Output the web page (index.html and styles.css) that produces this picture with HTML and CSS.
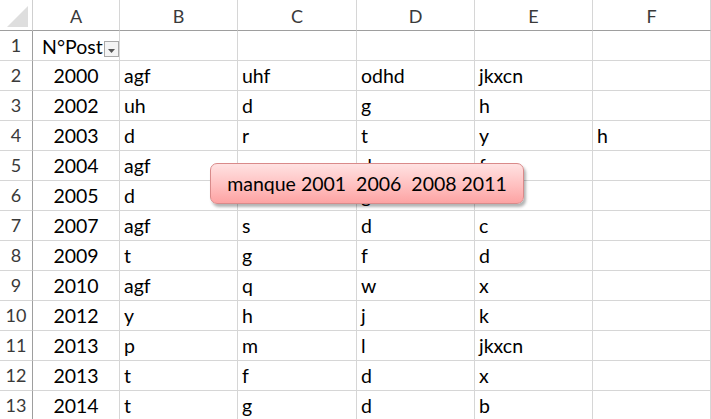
FILE: index.html
```html
<!DOCTYPE html>
<html>
<head>
<meta charset="utf-8">
<link rel="stylesheet" href="styles.css">
</head>
<body>
<div class="sheet">
  <div class="grid">
    <div class="corner"><svg width="22" height="21" viewBox="0 0 22 21"><polygon points="21,0 21,21 0,21" fill="#dedede"/></svg></div>
    <div class="colh">A</div><div class="colh">B</div><div class="colh">C</div><div class="colh">D</div><div class="colh">E</div><div class="colh">F</div>

    <div class="rowh">1</div><div class="c hdr">N°Post<span class="filter"><svg width="7" height="4" viewBox="0 0 7 4"><polygon points="0,0 7,0 3.5,4" fill="#555"/></svg></span></div><div class="c"></div><div class="c"></div><div class="c"></div><div class="c"></div><div class="c"></div>

    <div class="rowh">2</div><div class="c n">2000</div><div class="c">agf</div><div class="c">uhf</div><div class="c">odhd</div><div class="c">jkxcn</div><div class="c"></div>
    <div class="rowh">3</div><div class="c n">2002</div><div class="c">uh</div><div class="c">d</div><div class="c">g</div><div class="c">h</div><div class="c"></div>
    <div class="rowh">4</div><div class="c n">2003</div><div class="c">d</div><div class="c">r</div><div class="c">t</div><div class="c">y</div><div class="c">h</div>
    <div class="rowh">5</div><div class="c n">2004</div><div class="c">agf</div><div class="c"></div><div class="c">d</div><div class="c">f</div><div class="c"></div>
    <div class="rowh">6</div><div class="c n">2005</div><div class="c">d</div><div class="c"></div><div class="c">g</div><div class="c"></div><div class="c"></div>
    <div class="rowh">7</div><div class="c n">2007</div><div class="c">agf</div><div class="c">s</div><div class="c">d</div><div class="c">c</div><div class="c"></div>
    <div class="rowh">8</div><div class="c n">2009</div><div class="c">t</div><div class="c">g</div><div class="c">f</div><div class="c">d</div><div class="c"></div>
    <div class="rowh">9</div><div class="c n">2010</div><div class="c">agf</div><div class="c">q</div><div class="c">w</div><div class="c">x</div><div class="c"></div>
    <div class="rowh">10</div><div class="c n">2012</div><div class="c">y</div><div class="c">h</div><div class="c">j</div><div class="c">k</div><div class="c"></div>
    <div class="rowh">11</div><div class="c n">2013</div><div class="c">p</div><div class="c">m</div><div class="c">l</div><div class="c">jkxcn</div><div class="c"></div>
    <div class="rowh">12</div><div class="c n">2013</div><div class="c">t</div><div class="c">f</div><div class="c">d</div><div class="c">x</div><div class="c"></div>
    <div class="rowh">13</div><div class="c n">2014</div><div class="c">t</div><div class="c">g</div><div class="c">d</div><div class="c">b</div><div class="c"></div>
  </div>
  <div class="note">manque 2001&nbsp; 2006&nbsp; 2008 2011</div>
</div>
</body>
</html>
```

FILE: styles.css
```css
html, body {
  margin: 0;
  padding: 0;
  background: #fff;
  overflow: hidden;
}
.sheet {
  position: relative;
  width: 711px;
  height: 419px;
  overflow: hidden;
  font-family: Lato, "Open Sans", sans-serif;
}
.grid {
  display: grid;
  grid-template-columns: 33px 87px 118px 119px 118px 118px 118px;
  grid-template-rows: 31px repeat(13, 30px);
}
.corner {
  border-right: 1px solid #cfcfcf;
  border-bottom: 1px solid #9e9e9e;
  box-sizing: border-box;
  display: flex;
  align-items: flex-end;
  justify-content: flex-end;
  padding: 0 3px 3px 0;
}
.colh {
  box-sizing: border-box;
  border-right: 1px solid #d6d6d6;
  border-bottom: 1px solid #9e9e9e;
  display: flex;
  align-items: center;
  justify-content: center;
  font-size: 18px;
  color: #3a3a3a;
  padding-top: 2px;
}
.rowh {
  box-sizing: border-box;
  border-right: 1px solid #9e9e9e;
  border-bottom: 1px solid #d6d6d6;
  display: flex;
  align-items: flex-end;
  justify-content: center;
  font-size: 18px;
  color: #3a3a3a;
  padding-bottom: 4px;
}
.c {
  box-sizing: border-box;
  border-right: 1px solid #d6d6d6;
  border-bottom: 1px solid #d6d6d6;
  display: flex;
  align-items: flex-end;
  font-size: 19.5px;
  color: #000;
  padding: 0 0 3px 4px;
  white-space: nowrap;
}
.c.n {
  justify-content: center;
  padding-left: 0;
}
.c.hdr {
  padding-left: 9px;
  padding-bottom: 2px;
}
.filter {
  box-sizing: border-box;
  width: 17px;
  height: 16px;
  border: 1px solid #a9a9a9;
  background: #f4f4f4;
  margin-left: 1px;
  margin-bottom: 1px;
  display: flex;
  align-items: center;
  justify-content: center;
  padding-top: 3px;
}
.note {
  position: absolute;
  left: 210px;
  top: 163px;
  width: 314px;
  height: 41px;
  box-sizing: border-box;
  border: 1px solid #d98a8a;
  border-radius: 7px;
  background: linear-gradient(#ffe2e2, #ffc0c0 55%, #fda3a3);
  box-shadow: 2px 3px 3px rgba(0,0,0,0.3);
  display: flex;
  align-items: center;
  justify-content: center;
  font-size: 19.5px;
  color: #000;
  white-space: nowrap;
}
```
